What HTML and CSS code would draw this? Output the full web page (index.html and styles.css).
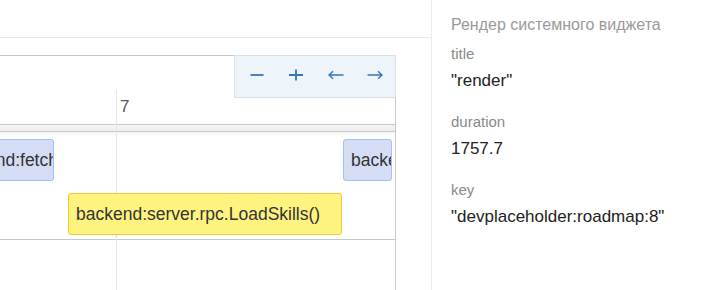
FILE: index.html
```html
<!DOCTYPE html>
<html lang="ru">
<head>
    <meta charset="UTF-8">
    <title>Timeline</title>
    <link rel="stylesheet" href="styles.css">
</head>
<body>
<div class="app">
    <div class="main">
        <div class="topbar"></div>
        <div class="viewport">
            <div class="timeline">
                <div class="controls">
                    <button class="btn" title="zoom out">
                        <svg width="16" height="16" viewBox="0 0 16 16"><path d="M1.5 8H14.5"/></svg>
                    </button>
                    <button class="btn" title="zoom in">
                        <svg width="16" height="16" viewBox="0 0 16 16"><path d="M1 8H15M8 2.5V13.5"/></svg>
                    </button>
                    <button class="btn" title="move left">
                        <svg width="16" height="16" viewBox="0 0 16 16" class="thin"><path d="M15.5 8H1M5 4.2L1 8L5 11.8"/></svg>
                    </button>
                    <button class="btn" title="move right">
                        <svg width="16" height="16" viewBox="0 0 16 16" class="thin"><path d="M0.5 8H15M11 4.2L15 8L11 11.8"/></svg>
                    </button>
                </div>
                <div class="grid" style="left:135px"></div>
                <div class="axis">
                    <span class="tick" style="left:139px">7</span>
                </div>
                <div class="axis-band"></div>
                <div class="items">
                    <div class="item blue" style="left:-40px;top:7px;width:113px">backend:fetchSkills()</div>
                    <div class="item blue" style="left:362px;top:7px;width:49px">backend:render()</div>
                    <div class="item yellow" style="left:87px;top:61px;width:274px">backend:server.rpc.LoadSkills()</div>
                </div>
                <div class="below"></div>
            </div>
        </div>
    </div>
    <div class="side">
        <div class="side-title">Рендер системного виджета</div>
        <div class="prop">
            <div class="prop-name">title</div>
            <div class="prop-value">"render"</div>
        </div>
        <div class="prop">
            <div class="prop-name">duration</div>
            <div class="prop-value">1757.7</div>
        </div>
        <div class="prop">
            <div class="prop-name">key</div>
            <div class="prop-value">"devplaceholder:roadmap:8"</div>
        </div>
    </div>
</div>
</body>
</html>
```

FILE: styles.css
```css
*{
    box-sizing: border-box;
}
body{
    margin: 0;
    font-family: "Liberation Sans", Arial, sans-serif;
    color: #222;
    background: #fff;
}
.app{
    display: flex;
    height: 290px;
    overflow: hidden;
}
.main{
    width: 431px;
    flex: none;
}
.topbar{
    height: 38px;
    border-bottom: 1px solid #e8e8e8;
}
.viewport{
    overflow: hidden;
    padding-top: 17px;
    height: 252px;
}
.timeline{
    position: relative;
    width: 416px;
    margin-left: -20px;
    border: 1px solid #c8c8c8;
    border-bottom: none;
}
.controls{
    position: absolute;
    top: -1px;
    right: -1px;
    width: 162px;
    height: 43px;
    display: flex;
    padding-left: 2px;
    background: #edf4fa;
    border: 1px solid #d9e2ea;
    z-index: 3;
}
.btn{
    width: 40px;
    height: 38px;
    padding: 0;
    border: none;
    background: none;
    display: flex;
    align-items: center;
    justify-content: center;
    cursor: pointer;
}
.btn svg{
    fill: none;
    stroke: #3576b8;
    stroke-width: 1.8;
}
.btn svg.thin{
    stroke-width: 1.4;
}
.grid{
    position: absolute;
    top: 34px;
    bottom: 0;
    width: 1px;
    background: #e6e6e6;
    z-index: 1;
}
.axis{
    position: relative;
    height: 68px;
}
.tick{
    position: absolute;
    top: 42px;
    font-size: 17px;
    line-height: 17px;
    color: #5a5a5a;
}
.axis-band{
    height: 8px;
    border-top: 1px solid #c8c8c8;
    border-bottom: 1px solid #c8c8c8;
    background: linear-gradient(#f5f5f5, #ededed);
    box-shadow: 0 2px 4px rgba(0,0,0,0.05);
}
.items{
    position: relative;
    height: 108px;
    border-bottom: 1px solid #c8c8c8;
}
.item{
    position: absolute;
    height: 42px;
    padding: 0 7px;
    line-height: 40px;
    font-size: 17.5px;
    color: #333;
    white-space: nowrap;
    overflow: hidden;
    border-radius: 3px;
    z-index: 2;
}
.blue{
    background: #d5ddf6;
    border: 1px solid #a7bdf5;
}
.yellow{
    background: #fff380;
    border: 1px solid #f3c635;
}
.below{
    height: 60px;
}
.side{
    flex: 1;
    border-left: 1px solid #ececec;
    padding: 14px 0 0 19px;
}
.side-title{
    font-size: 16px;
    line-height: 22px;
    color: #9a9a9a;
    margin-bottom: 8px;
}
.prop{
    margin-bottom: 20px;
}
.prop-name{
    font-size: 15px;
    line-height: 20px;
    color: #8a8a8a;
    margin-bottom: 6px;
}
.prop-value{
    font-size: 17px;
    line-height: 22px;
    color: #222;
}
```
